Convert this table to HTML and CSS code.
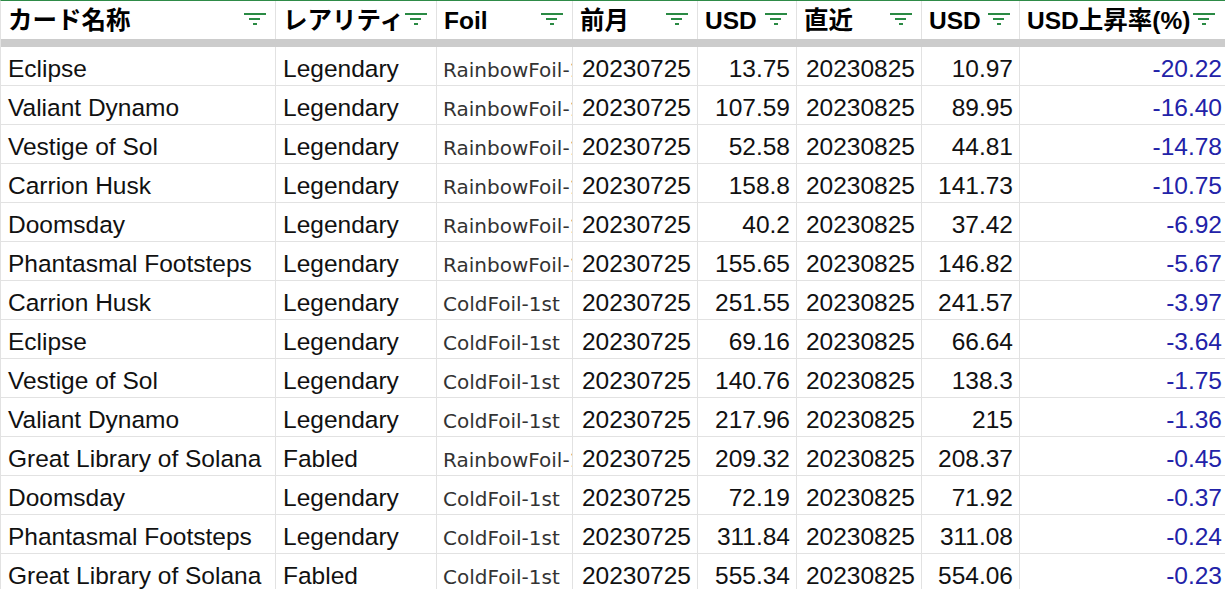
FILE: index.html
```html
<!DOCTYPE html>
<html lang="ja">
<head>
<meta charset="utf-8">
<title>Sheet</title>
<link rel="stylesheet" href="styles.css">
</head>
<body>
<div class="sheet">
  <div class="hcell"><span>カード名称</span><svg class="filt" viewBox="0 0 22 12"><rect x="0" y="0" width="22" height="2"/><rect x="5" y="5" width="11" height="2"/><rect x="9" y="10" width="4" height="2"/></svg></div>
  <div class="hcell"><span>レアリティ</span><svg class="filt" viewBox="0 0 22 12"><rect x="0" y="0" width="22" height="2"/><rect x="5" y="5" width="11" height="2"/><rect x="9" y="10" width="4" height="2"/></svg></div>
  <div class="hcell"><span>Foil</span><svg class="filt" viewBox="0 0 22 12"><rect x="0" y="0" width="22" height="2"/><rect x="5" y="5" width="11" height="2"/><rect x="9" y="10" width="4" height="2"/></svg></div>
  <div class="hcell"><span>前月</span><svg class="filt" viewBox="0 0 22 12"><rect x="0" y="0" width="22" height="2"/><rect x="5" y="5" width="11" height="2"/><rect x="9" y="10" width="4" height="2"/></svg></div>
  <div class="hcell"><span>USD</span><svg class="filt" viewBox="0 0 22 12"><rect x="0" y="0" width="22" height="2"/><rect x="5" y="5" width="11" height="2"/><rect x="9" y="10" width="4" height="2"/></svg></div>
  <div class="hcell"><span>直近</span><svg class="filt" viewBox="0 0 22 12"><rect x="0" y="0" width="22" height="2"/><rect x="5" y="5" width="11" height="2"/><rect x="9" y="10" width="4" height="2"/></svg></div>
  <div class="hcell"><span>USD</span><svg class="filt" viewBox="0 0 22 12"><rect x="0" y="0" width="22" height="2"/><rect x="5" y="5" width="11" height="2"/><rect x="9" y="10" width="4" height="2"/></svg></div>
  <div class="hcell last"><span>USD上昇率(%)</span><svg class="filt" viewBox="0 0 22 12"><rect x="0" y="0" width="22" height="2"/><rect x="5" y="5" width="11" height="2"/><rect x="9" y="10" width="4" height="2"/></svg></div>
  <div class="freeze"></div>

  <div class="c">Eclipse</div><div class="c">Legendary</div><div class="c foil">RainbowFoil-1st</div><div class="c n">20230725</div><div class="c n">13.75</div><div class="c n">20230825</div><div class="c n">10.97</div><div class="c n neg">-20.22</div>
  <div class="c">Valiant Dynamo</div><div class="c">Legendary</div><div class="c foil">RainbowFoil-1st</div><div class="c n">20230725</div><div class="c n">107.59</div><div class="c n">20230825</div><div class="c n">89.95</div><div class="c n neg">-16.40</div>
  <div class="c">Vestige of Sol</div><div class="c">Legendary</div><div class="c foil">RainbowFoil-1st</div><div class="c n">20230725</div><div class="c n">52.58</div><div class="c n">20230825</div><div class="c n">44.81</div><div class="c n neg">-14.78</div>
  <div class="c">Carrion Husk</div><div class="c">Legendary</div><div class="c foil">RainbowFoil-1st</div><div class="c n">20230725</div><div class="c n">158.8</div><div class="c n">20230825</div><div class="c n">141.73</div><div class="c n neg">-10.75</div>
  <div class="c">Doomsday</div><div class="c">Legendary</div><div class="c foil">RainbowFoil-1st</div><div class="c n">20230725</div><div class="c n">40.2</div><div class="c n">20230825</div><div class="c n">37.42</div><div class="c n neg">-6.92</div>
  <div class="c">Phantasmal Footsteps</div><div class="c">Legendary</div><div class="c foil">RainbowFoil-1st</div><div class="c n">20230725</div><div class="c n">155.65</div><div class="c n">20230825</div><div class="c n">146.82</div><div class="c n neg">-5.67</div>
  <div class="c">Carrion Husk</div><div class="c">Legendary</div><div class="c foil">ColdFoil-1st</div><div class="c n">20230725</div><div class="c n">251.55</div><div class="c n">20230825</div><div class="c n">241.57</div><div class="c n neg">-3.97</div>
  <div class="c">Eclipse</div><div class="c">Legendary</div><div class="c foil">ColdFoil-1st</div><div class="c n">20230725</div><div class="c n">69.16</div><div class="c n">20230825</div><div class="c n">66.64</div><div class="c n neg">-3.64</div>
  <div class="c">Vestige of Sol</div><div class="c">Legendary</div><div class="c foil">ColdFoil-1st</div><div class="c n">20230725</div><div class="c n">140.76</div><div class="c n">20230825</div><div class="c n">138.3</div><div class="c n neg">-1.75</div>
  <div class="c">Valiant Dynamo</div><div class="c">Legendary</div><div class="c foil">ColdFoil-1st</div><div class="c n">20230725</div><div class="c n">217.96</div><div class="c n">20230825</div><div class="c n">215</div><div class="c n neg">-1.36</div>
  <div class="c">Great Library of Solana</div><div class="c">Fabled</div><div class="c foil">RainbowFoil-1st</div><div class="c n">20230725</div><div class="c n">209.32</div><div class="c n">20230825</div><div class="c n">208.37</div><div class="c n neg">-0.45</div>
  <div class="c">Doomsday</div><div class="c">Legendary</div><div class="c foil">ColdFoil-1st</div><div class="c n">20230725</div><div class="c n">72.19</div><div class="c n">20230825</div><div class="c n">71.92</div><div class="c n neg">-0.37</div>
  <div class="c">Phantasmal Footsteps</div><div class="c">Legendary</div><div class="c foil">ColdFoil-1st</div><div class="c n">20230725</div><div class="c n">311.84</div><div class="c n">20230825</div><div class="c n">311.08</div><div class="c n neg">-0.24</div>
  <div class="c">Great Library of Solana</div><div class="c">Fabled</div><div class="c foil">ColdFoil-1st</div><div class="c n">20230725</div><div class="c n">555.34</div><div class="c n">20230825</div><div class="c n">554.06</div><div class="c n neg">-0.23</div>
</div>
</body>
</html>
```

FILE: styles.css
```css
html, body {
  margin: 0;
  padding: 0;
  overflow: hidden;
  background: #ffffff;
}

.sheet {
  display: grid;
  grid-template-columns: 275px 161px 136px 125px 99px 125px 98px 209px;
  grid-template-rows: 38px 8px;
  grid-auto-rows: 39px;
  width: 1229px;
  border-top: 1px solid #2e8b47;
  border-left: 1px solid #e2e2e2;
  font-family: "Liberation Sans", Arial, "Noto Sans CJK JP", sans-serif;
  color: #000000;
}

.hcell {
  box-sizing: border-box;
  height: 38px;
  display: flex;
  align-items: center;
  justify-content: space-between;
  padding: 2px 9px 0 7px;
  border-right: 1px solid #e2e2e2;
  font-weight: bold;
  font-size: 24.5px;
  line-height: 28px;
  white-space: nowrap;
  overflow: hidden;
}

.hcell span {
  overflow: hidden;
}

.hcell.last {
  padding-right: 13px;
}

.filt {
  flex: none;
  width: 22px;
  height: 12px;
  margin-left: 2px;
  margin-top: -4px;
  fill: #2a8a44;
}

.freeze {
  grid-column: 1 / -1;
  height: 8px;
  background: #cccccc;
}

.c {
  box-sizing: border-box;
  height: 39px;
  padding: 8px 6px 0 7px;
  border-right: 1px solid #e2e2e2;
  border-bottom: 1px solid #e2e2e2;
  font-size: 24.5px;
  line-height: 28px;
  white-space: nowrap;
  overflow: hidden;
  color: #111111;
}

.c.n {
  text-align: right;
  padding-left: 4px;
}

.c.foil {
  font-family: "DejaVu Sans", sans-serif;
  font-size: 20px;
  padding-top: 9px;
  padding-left: 6px;
  padding-right: 0;
  color: #333333;
  text-overflow: clip;
}

.c.neg {
  color: #2222a8;
}
```
